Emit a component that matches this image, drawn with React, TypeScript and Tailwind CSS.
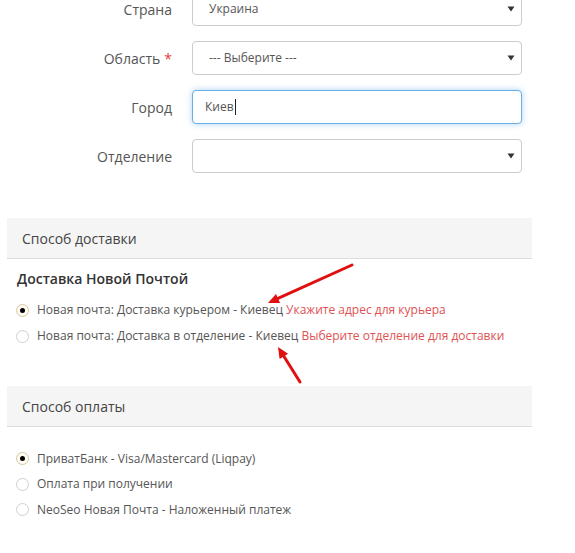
import React from 'react';

const font = "font-['Open_Sans',sans-serif]";

const Caret = () => (
  <svg width="8" height="6" viewBox="0 0 8 6" className="absolute right-[6px] top-1/2 -translate-y-1/2">
    <path d="M0.5 0.5 L7.5 0.5 L4 5.5 Z" fill="#333" />
  </svg>
);

const FormRow: React.FC<{ label: string; required?: boolean; children: React.ReactNode }> = ({ label, required, children }) => (
  <div className="flex items-center h-[34px] mb-[15px]">
    <div className="w-[172px] text-right text-[14px] text-[#555]">
      {label}
      {required && <span className="text-[#e03b3b] ml-[4px]">*</span>}
    </div>
    <div className="ml-[20px] w-[330px] h-full">{children}</div>
  </div>
);

const Select: React.FC<{ value?: string }> = ({ value }) => (
  <div className="relative h-full rounded-[4px] border border-[#ccc] bg-white flex items-center pl-[16px] text-[12px] text-[#555]">
    {value}
    <Caret />
  </div>
);

const Radio: React.FC<{ checked?: boolean; children: React.ReactNode; h?: string }> = ({ checked, children, h = 'h-[26px]' }) => (
  <div className={`flex items-center ${h} pl-[16px] text-[12px] text-[#555]`}>
    <span
      className={`w-[13px] h-[13px] rounded-full border flex items-center justify-center mr-[8px] ${
        checked ? 'border-[#d9c79a] bg-[#fffdf5]' : 'border-[#d0d0d0] bg-white'
      }`}
    >
      {checked && <span className="w-[5px] h-[5px] rounded-full bg-black" />}
    </span>
    <span>{children}</span>
  </div>
);

const SectionHeader: React.FC<{ title: string; h: string }> = ({ title, h }) => (
  <div className={`mx-[7px] w-[525px] ${h} bg-[#f5f5f5] border-b border-[#ddd] px-[15px] flex items-center text-[14px] text-[#444]`}>
    {title}
  </div>
);

const Arrow: React.FC<{ x1: number; y1: number; x2: number; y2: number }> = ({ x1, y1, x2, y2 }) => {
  const a = Math.atan2(y2 - y1, x2 - x1);
  const len = 11;
  const w = 5;
  const bx = x2 - len * Math.cos(a);
  const by = y2 - len * Math.sin(a);
  const px = -Math.sin(a) * w;
  const py = Math.cos(a) * w;
  return (
    <g>
      <line x1={x1} y1={y1} x2={bx} y2={by} stroke="#e01010" strokeWidth="3" strokeLinecap="round" />
      <polygon points={`${x2},${y2} ${bx + px},${by + py} ${bx - px},${by - py}`} fill="#e01010" />
    </g>
  );
};

export default function App() {
  return (
    <div className={`relative w-[575px] h-[553px] overflow-hidden bg-white ${font}`}>
      <div className="-mt-[8px]">
        <FormRow label="Страна">
          <Select value="Украина" />
        </FormRow>
        <FormRow label="Область" required>
          <Select value="--- Выберите ---" />
        </FormRow>
        <FormRow label="Город">
          <div className="h-full rounded-[4px] border border-[#66afe9] shadow-[0_0_6px_rgba(102,175,233,0.55)] bg-white flex items-center pl-[12px] text-[12px] text-[#555]">
            Киев<span className="inline-block w-[1px] h-[16px] bg-[#222] ml-[1px]" />
          </div>
        </FormRow>
        <FormRow label="Отделение">
          <Select />
        </FormRow>
      </div>

      <div className="mt-[45px]">
        <SectionHeader title="Способ доставки" h="h-[41px]" />
        <div className="mt-[10px] pl-[17px] text-[14px] font-semibold text-[#333] leading-[20px]">
          Доставка Новой Почтой
        </div>
        <div className="mt-[8px]">
          <Radio checked>
            Новая почта: Доставка курьером - Киевец <span className="text-[#e05252]">Укажите адрес для курьера</span>
          </Radio>
          <Radio>
            Новая почта: Доставка в отделение - Киевец <span className="text-[#e05252]">Выберите отделение для доставки</span>
          </Radio>
        </div>
      </div>

      <div className="mt-[37px]">
        <SectionHeader title="Способ оплаты" h="h-[41px]" />
        <div className="mt-[19px]">
          <Radio checked h="h-[25.5px]">ПриватБанк - Visa/Mastercard (Liqpay)</Radio>
          <Radio h="h-[25.5px]">Оплата при получении</Radio>
          <Radio h="h-[25.5px]">NeoSeo Новая Почта - Наложенный платеж</Radio>
        </div>
      </div>

      <svg className="absolute inset-0 pointer-events-none" width="575" height="553">
        <Arrow x1={352} y1={265} x2={268} y2={303} />
        <Arrow x1={300} y1={382} x2={278} y2={347} />
      </svg>
    </div>
  );
}
